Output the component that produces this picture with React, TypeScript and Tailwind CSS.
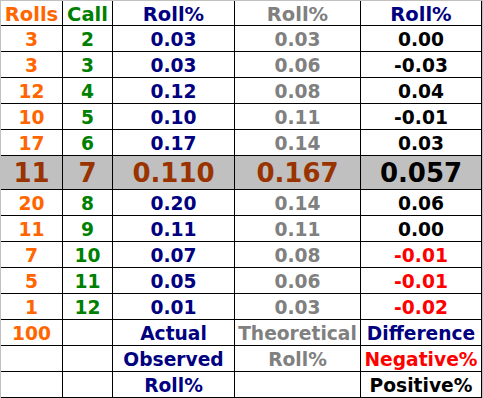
import React from "react";

type Cell = { t: string; c: string };

const OR = "text-[#ff6600]";
const GR = "text-[#008000]";
const NV = "text-[#000080]";
const GY = "text-[#808080]";
const BK = "text-black";
const RD = "text-[#ff0000]";
const BR = "text-[#993300]";

const dataRows: [string, string, string, string, string][] = [
  ["3", "2", "0.03", "0.03", "0.00"],
  ["3", "3", "0.03", "0.06", "-0.03"],
  ["12", "4", "0.12", "0.08", "0.04"],
  ["10", "5", "0.10", "0.11", "-0.01"],
  ["17", "6", "0.17", "0.14", "0.03"],
];
const dataRows2: [string, string, string, string, string][] = [
  ["20", "8", "0.20", "0.14", "0.06"],
  ["11", "9", "0.11", "0.11", "0.00"],
  ["7", "10", "0.07", "0.08", "-0.01"],
  ["5", "11", "0.05", "0.06", "-0.01"],
  ["1", "12", "0.01", "0.03", "-0.02"],
];

function toCells(r: [string, string, string, string, string]): Cell[] {
  return [
    { t: r[0], c: OR },
    { t: r[1], c: GR },
    { t: r[2], c: NV },
    { t: r[3], c: GY },
    { t: r[4], c: r[4].startsWith("-") && r[1] !== "3" && r[1] !== "5" ? RD : BK },
  ];
}

function Row({ cells, h, size, bg, pad }: { cells: Cell[]; h: string; size: string; bg?: string; pad?: string }) {
  return (
    <>
      {cells.map((cell, i) => (
        <div
          key={i}
          className={`${h} ${size} ${cell.c} ${bg ?? "bg-white"} ${pad ?? "pt-[3px]"} flex items-center justify-center whitespace-nowrap border-r border-b border-black leading-none`}
        >
          {cell.t}
        </div>
      ))}
    </>
  );
}

export default function App() {
  const header: Cell[] = [
    { t: "Rolls", c: OR },
    { t: "Call", c: GR },
    { t: "Roll%", c: NV },
    { t: "Roll%", c: GY },
    { t: "Roll%", c: NV },
  ];
  const hl: Cell[] = [
    { t: "11", c: BR },
    { t: "7", c: BR },
    { t: "0.110", c: BR },
    { t: "0.167", c: BR },
    { t: "0.057", c: BK },
  ];
  const foot1: Cell[] = [
    { t: "100", c: OR },
    { t: "", c: BK },
    { t: "Actual", c: NV },
    { t: "Theoretical", c: GY },
    { t: "Difference", c: NV },
  ];
  const foot2: Cell[] = [
    { t: "", c: BK },
    { t: "", c: BK },
    { t: "Observed", c: NV },
    { t: "Roll%", c: GY },
    { t: "Negative%", c: RD },
  ];
  const foot3: Cell[] = [
    { t: "", c: BK },
    { t: "", c: BK },
    { t: "Roll%", c: NV },
    { t: "", c: BK },
    { t: "Positive%", c: BK },
  ];

  return (
    <div className="w-[483px] h-[398px] bg-white font-['DejaVu_Sans',Verdana,sans-serif] font-bold">
      <div className="grid grid-cols-[62px_50px_122px_126px_121px] border-l border-t border-r border-[#c0c0c0] w-[483px]">
        <Row cells={header} h="h-[25px]" size="text-[19.5px]" />
        {dataRows.map((r, i) => (
          <Row key={"a" + i} cells={toCells(r)} h="h-[26px]" size="text-[18.67px]" />
        ))}
        <Row cells={hl} h="h-[34px]" size="text-[26px]" bg="bg-[#c0c0c0]" pad="pt-[1px]" />
        {dataRows2.map((r, i) => (
          <Row key={"b" + i} cells={toCells(r)} h="h-[26px]" size="text-[18.67px]" />
        ))}
        <Row cells={foot1} h="h-[26px]" size="text-[18.67px]" />
        <Row cells={foot2} h="h-[26px]" size="text-[18.67px]" />
        <Row cells={foot3} h="h-[26px]" size="text-[18.67px]" />
      </div>
    </div>
  );
}
